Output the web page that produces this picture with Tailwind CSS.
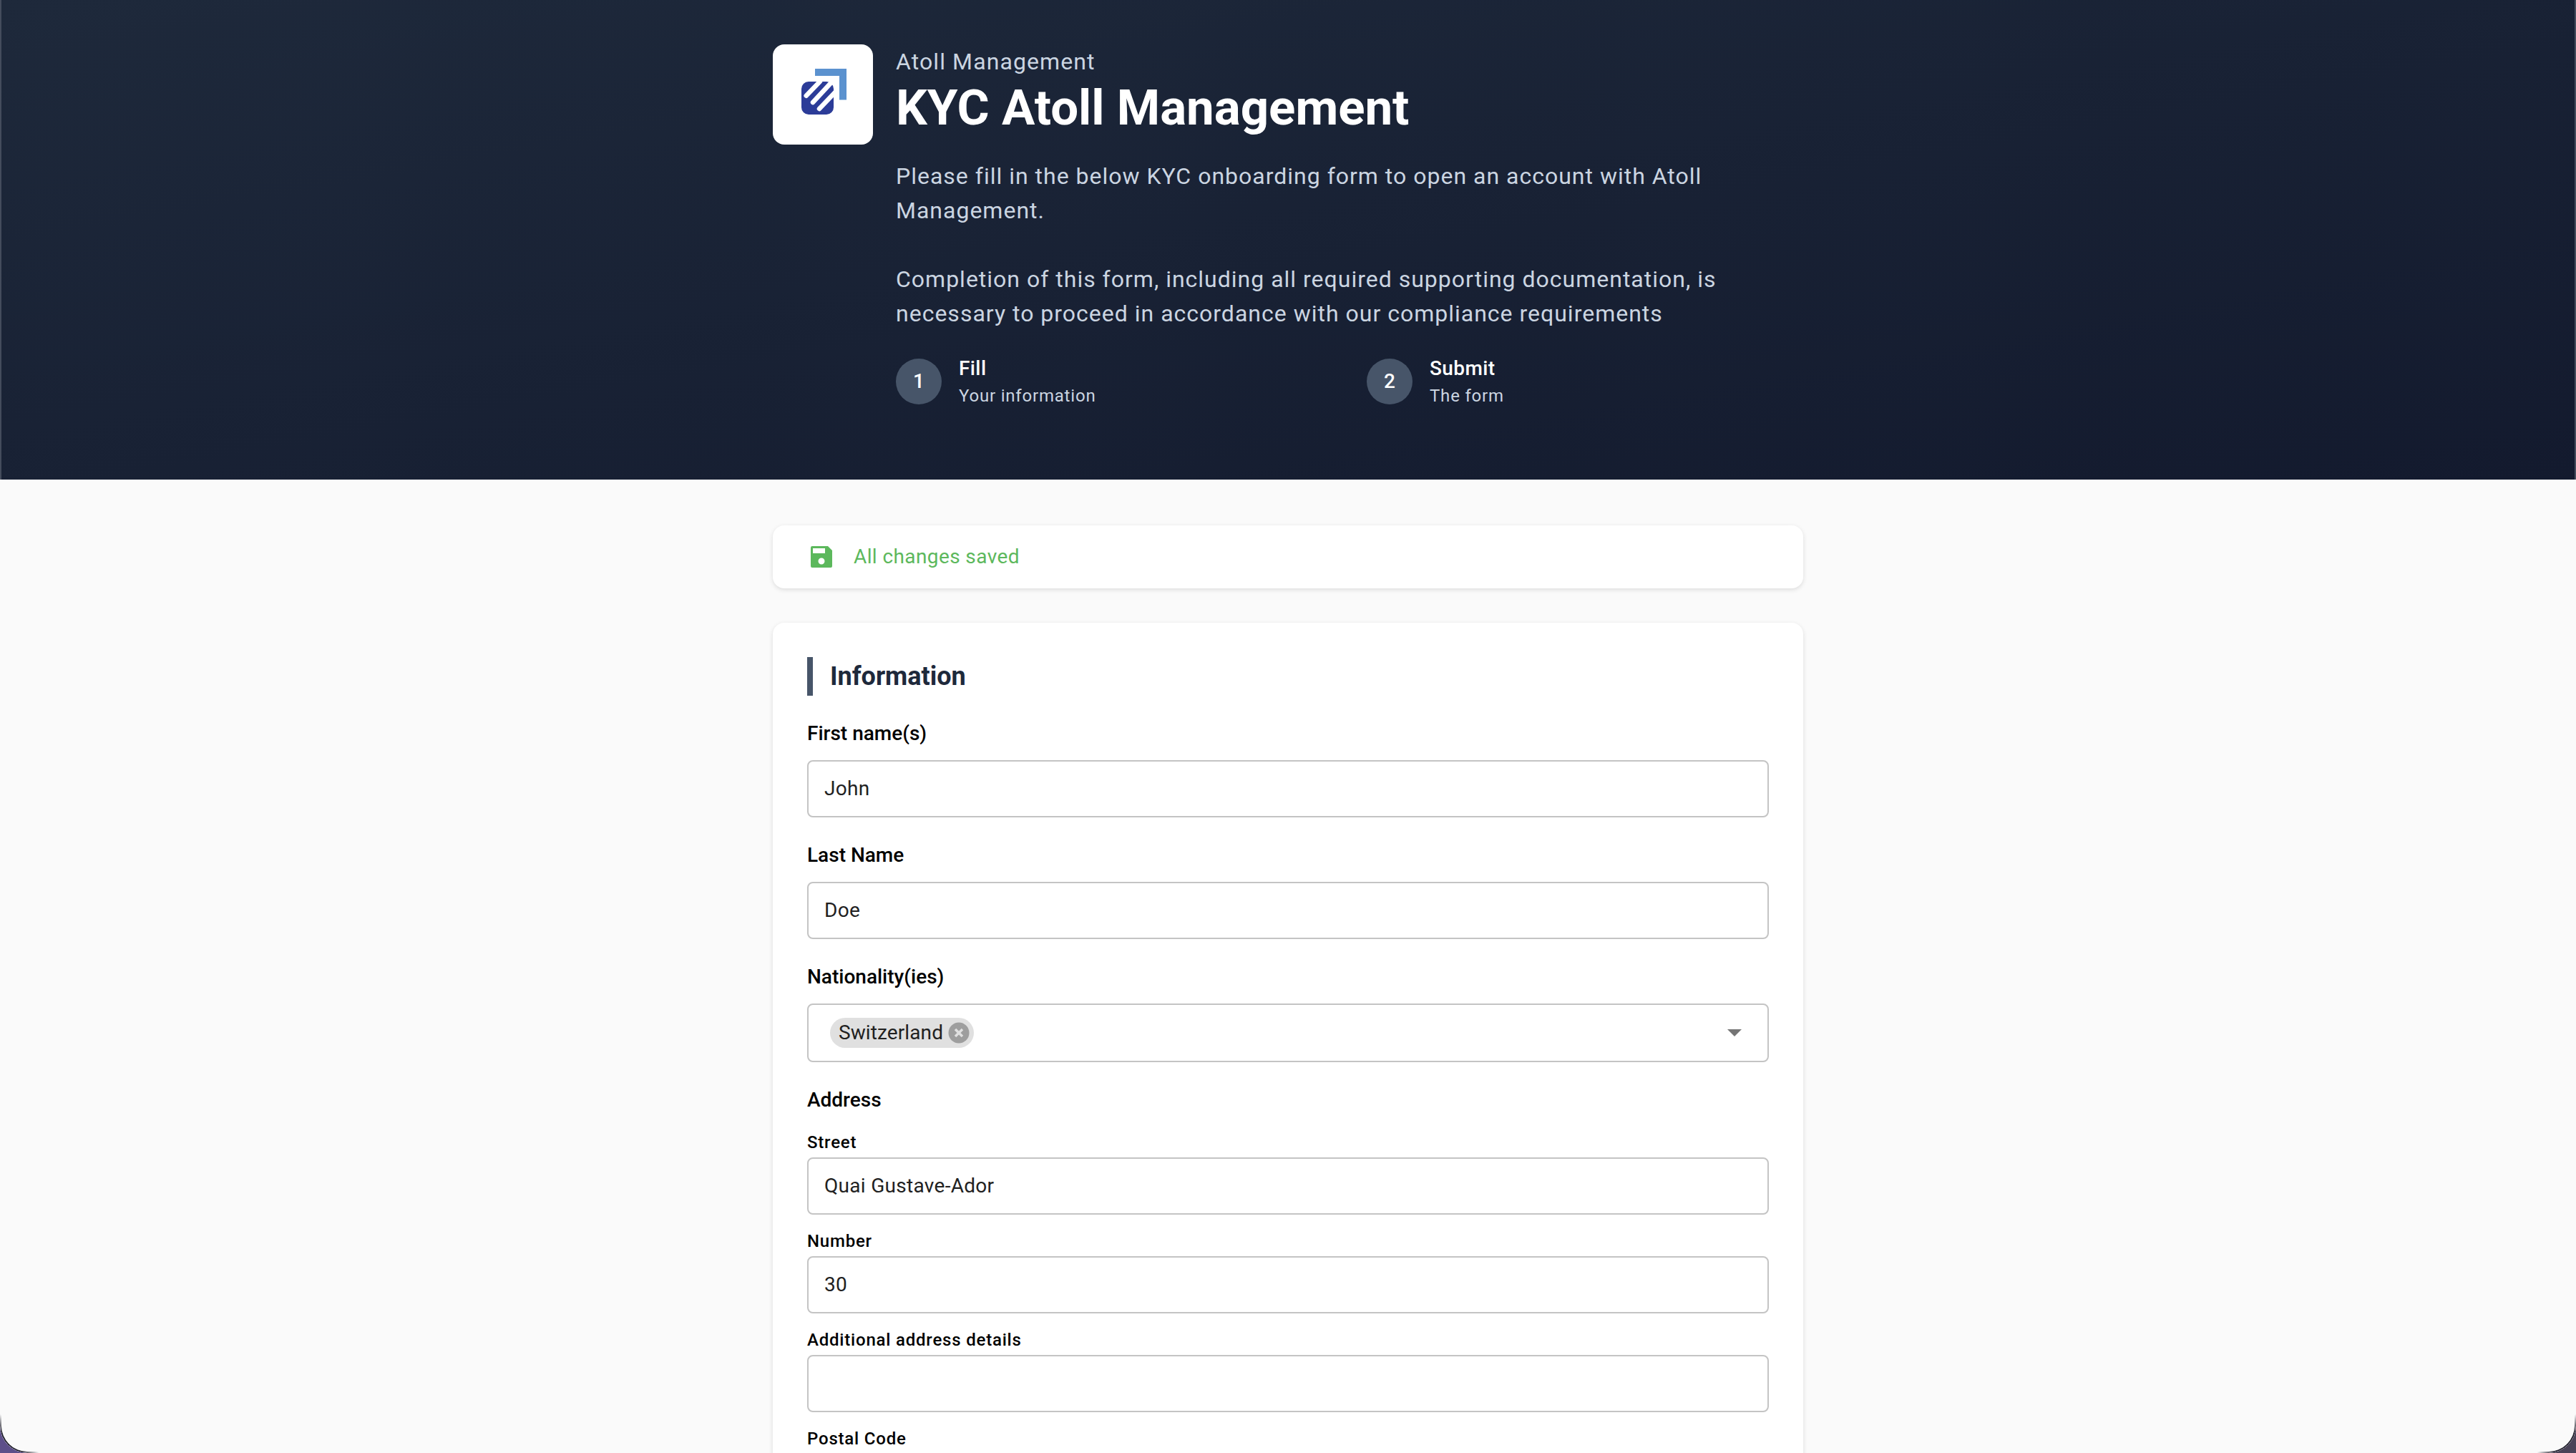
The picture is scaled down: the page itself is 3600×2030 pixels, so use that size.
<!DOCTYPE html>
<html lang="en">
<head>
  <meta charset="UTF-8">
  <title>KYC Atoll Management</title>
  <meta name="viewport" content="width=device-width, initial-scale=1.0">
  <script src="https://cdn.jsdelivr.net/npm/@tailwindcss/browser@4"></script>
</head>
<body class="bg-gradient-to-r from-[#5d4f8a] to-[#4a4458] h-[2030px] overflow-hidden font-['Roboto',sans-serif]">

  <div class="relative h-[2030px] overflow-hidden rounded-b-[38px] bg-[#fafafa]">

    <!-- Header -->
    <header class="h-[670px] border-x-2 border-[#444c5c] bg-[linear-gradient(170deg,#1e293b,#131a2e)]">
      <div class="w-[1440px] mx-auto pt-[62px] flex gap-8">
        <div class="w-[140px] h-[140px] shrink-0 bg-white rounded-2xl flex items-center justify-center">
          <svg class="ml-[3px] -mt-[8px]" width="63" height="64" viewBox="0 0 63 64">
            <path d="M19 0H63V43.5H53V10H19Z" fill="#5b92cf"/>
            <rect x="0" y="18" width="45" height="46" rx="10" fill="#2c3c98"/>
            <g stroke="#fff" stroke-width="6.5" stroke-linecap="round">
              <line x1="6.7" y1="37.7" x2="26" y2="17.7"/>
              <line x1="16" y1="47" x2="42" y2="19"/>
              <line x1="25" y1="56" x2="47" y2="33"/>
            </g>
          </svg>
        </div>
        <div class="w-[1160px] text-[#cbd5e1]">
          <div class="text-[32px] leading-[40px] tracking-[1.1px] mt-[4px] text-[#cbd5e1]">Atoll Management</div>
          <h1 class="text-[69px] leading-[72px] font-bold text-white mt-[9px]">KYC Atoll Management</h1>
          <p class="text-[32px] leading-[48px] tracking-[1px] mt-[35px] w-[1180px]">Please fill in the below KYC onboarding form to open an account with Atoll Management.</p>
          <p class="text-[32px] leading-[48px] tracking-[1px] mt-[48px] w-[1180px]">Completion of this form, including all required supporting documentation, is necessary to proceed in accordance with our compliance requirements</p>
          <div class="flex mt-[33px]">
            <div class="w-[658px] flex items-center gap-6">
              <div class="w-16 h-16 rounded-full bg-[#475569] text-white text-[28px] font-medium flex items-center justify-center">1</div>
              <div>
                <div class="text-[28px] leading-[40px] tracking-[0.4px] font-medium text-white">Fill</div>
                <div class="text-[24px] leading-[36px] tracking-[0.8px] text-[#cbd5e1]">Your information</div>
              </div>
            </div>
            <div class="flex items-center gap-6">
              <div class="w-16 h-16 rounded-full bg-[#475569] text-white text-[28px] font-medium flex items-center justify-center">2</div>
              <div>
                <div class="text-[28px] leading-[40px] tracking-[0.4px] font-medium text-white">Submit</div>
                <div class="text-[24px] leading-[36px] tracking-[0.8px] text-[#cbd5e1]">The form</div>
              </div>
            </div>
          </div>
        </div>
      </div>
    </header>

    <main class="w-[1440px] mx-auto pt-16">
      <!-- Save status -->
      <div class="h-[88px] bg-white rounded-2xl shadow-[0_2px_6px_rgba(0,0,0,0.12)] flex items-center pl-[53px] gap-[30px]">
        <svg width="30" height="30" viewBox="0 0 30 30" fill="#5cb85c">
          <path fill-rule="evenodd" d="M2 0H24L30 6V28Q30 30 28 30H2Q0 30 0 28V2Q0 0 2 0ZM3 3V10H20V3ZM15 16.5A4.5 4.5 0 1 0 15 25.500A4.500 4.500 0 1 0 15 16.5Z"/>
        </svg>
        <span class="text-[28px] tracking-[0.4px] text-[#5cb85c]">All changes saved</span>
      </div>

      <!-- Information card -->
      <section class="mt-12 bg-white rounded-t-2xl shadow-[0_2px_6px_rgba(0,0,0,0.12)] px-12 pt-12 h-[1200px]">
        <h2 class="h-[54px] border-l-8 border-[#475569] pl-6 flex items-center text-[36px] font-bold text-[#1e293b]">Information</h2>

        <label class="block mt-[33px] text-[28px] leading-[40px] font-medium text-black">First name(s)</label>
        <input type="text" value="John" class="block mt-[17px] w-full h-20 border-2 border-[#c4c4c4] rounded-lg px-[22px] pb-[2px] text-[28px] tracking-[0.3px] text-[#212121]">

        <label class="block mt-[33px] text-[28px] leading-[40px] font-medium text-black">Last Name</label>
        <input type="text" value="Doe" class="block mt-[17px] w-full h-20 border-2 border-[#c4c4c4] rounded-lg px-[22px] pb-[2px] text-[28px] tracking-[0.3px] text-[#212121]">

        <label class="block mt-[33px] text-[28px] leading-[40px] font-medium text-black">Nationality(ies)</label>
        <div class="mt-[17px] h-[82px] border-2 border-[#c4c4c4] rounded-lg pl-[30px] pr-[36px] flex items-center justify-between">
          <span class="h-[42px] rounded-full bg-[#e0e0e0] flex items-center pl-3 pr-[6px] gap-[7px] text-[28px] tracking-[0.1px] text-[#212121]">
            Switzerland
            <svg width="30" height="30" viewBox="0 0 30 30">
              <circle cx="15" cy="15" r="14.5" fill="#9e9e9e"/>
              <path d="M10 10L20 20M20 10L10 20" stroke="#e0e0e0" stroke-width="3.500"/>
            </svg>
          </span>
          <svg width="20" height="10" viewBox="0 0 20 10"><path d="M0 0H20L10 10Z" fill="#757575"/></svg>
        </div>

        <div class="mt-[33px] text-[28px] leading-[40px] font-medium text-black">Address</div>

        <label class="block mt-[21px] text-[24px] leading-[36px] tracking-[0.8px] font-medium text-black">Street</label>
        <input type="text" value="Quai Gustave-Ador" class="block mt-[3px] w-full h-20 border-2 border-[#c4c4c4] rounded-lg px-[22px] pb-[2px] text-[28px] tracking-[0.3px] text-[#212121]">

        <label class="block mt-[19px] text-[24px] leading-[36px] tracking-[0.8px] font-medium text-black">Number</label>
        <input type="text" value="30" class="block mt-[3px] w-full h-20 border-2 border-[#c4c4c4] rounded-lg px-[22px] pb-[2px] text-[28px] tracking-[0.3px] text-[#212121]">

        <label class="block mt-[19px] text-[24px] leading-[36px] tracking-[0.8px] font-medium text-black">Additional address details</label>
        <input type="text" class="block mt-[3px] w-full h-20 border-2 border-[#c4c4c4] rounded-lg px-[22px] pb-[2px] text-[28px] tracking-[0.3px] text-[#212121]">

        <label class="block mt-[19px] text-[24px] leading-[36px] tracking-[0.8px] font-medium text-black">Postal Code</label>
      </section>
    </main>

    <!-- window corner edges -->
    <div class="absolute left-0 bottom-0 w-[60px] h-[60px] border-l-2 border-b-2 border-[#1c1c28] rounded-bl-[38px] [mask-image:linear-gradient(45deg,black_25%,transparent_46%)]"></div>
    <div class="absolute right-0 bottom-0 w-[60px] h-[60px] border-r-2 border-b-2 border-[#1c1c28] rounded-br-[38px] [mask-image:linear-gradient(-45deg,black_25%,transparent_46%)]"></div>
  </div>

</body>
</html>
